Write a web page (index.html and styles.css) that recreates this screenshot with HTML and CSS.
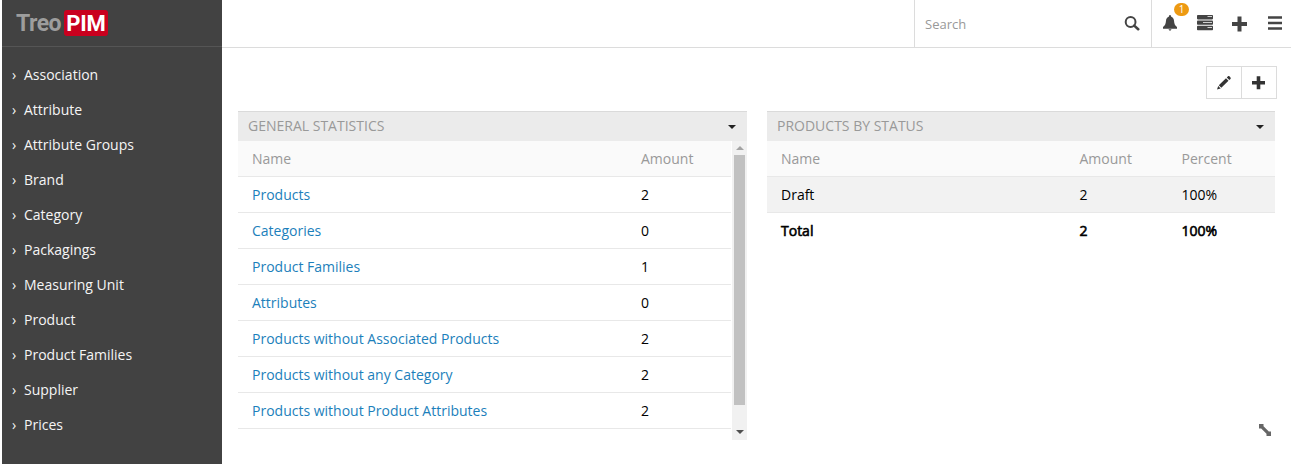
FILE: index.html
```html
<!DOCTYPE html>
<html lang="en">
<head>
<meta charset="utf-8">
<title>TreoPIM</title>
<link rel="stylesheet" href="styles.css">
</head>
<body>
<aside class="sidebar">
  <div class="logo"><span class="logo-name">Treo</span><span class="logo-badge">PIM</span></div>
  <nav class="menu">
    <a>Association</a><a>Attribute</a><a>Attribute Groups</a><a>Brand</a><a>Category</a><a>Packagings</a><a>Measuring Unit</a><a>Product</a><a>Product Families</a><a>Supplier</a><a>Prices</a>
  </nav>
</aside>
<main class="main">
  <header class="topbar">
    <div class="search"><span>Search</span>
      <svg width="16" height="16" viewBox="0 0 16 16"><circle cx="6.600" cy="6" r="4.900" fill="none" stroke="#444" stroke-width="2"/><path d="M10.200 9.600l4 3.600" stroke="#444" stroke-width="2.600" stroke-linecap="round"/></svg>
    </div>
    <div class="tools">
      <span class="bell"><svg width="16" height="17" viewBox="0 0 16 17"><path fill="#444" d="M8 0c.6 0 1 .6 1 1.400C11 2 11.800 3.700 12 5.700c.3 3 .8 4.800 3 6.300V13.800H1V12c2.200-1.500 2.700-3.300 3-6.300C4.200 3.700 5 2 7 1.400 7 .6 7.400 0 8 0z"/><path fill="#444" d="M6.400 14.200h3.200L8 16z"/></svg><span class="badge">1</span></span>
      <svg class="tasks" width="16" height="16" viewBox="0 0 16 16"><g fill="#444"><rect width="16" height="4.400" y="0" rx=".8"/><rect width="16" height="4.400" y="5.400" rx=".8"/><rect width="16" height="4.400" y="10.800" rx=".8"/></g><path stroke="#fff" stroke-width="1" d="M10.500 1.500H15M6 7.500H15M10.500 12.500H15" opacity=".75"/></svg>
      <svg class="add" width="16" height="16" viewBox="0 0 16 16"><path stroke="#444" stroke-width="4" d="M1 8h15M8.500 .5v15"/></svg>
      <svg class="burger" width="14" height="14" viewBox="0 0 14 14"><path stroke="#444" stroke-width="2.600" d="M0 1.500h14M0 7h14M0 12.500h14"/></svg>
    </div>
  </header>
  <div class="actions">
    <div class="button-group">
      <span class="button"><svg width="16" height="16" viewBox="0 0 16 16"><path fill="#333" d="M1 14.500l1.200-3.600 2.500 2.500zM2.800 10.200l7.200-7 2.500 2.500-7.200 7zM10.800 2.400l1.200-1.100c.5-.5 1-.4 1.400 0l1.100 1.200c.4.4.4 1 0 1.400l-1.200 1.100z"/></svg></span>
      <span class="button"><svg width="14" height="14" viewBox="0 0 14 14"><path stroke="#333" stroke-width="3.600" d="M0 6.800h13M6.500 .3v13"/></svg></span>
    </div>
  </div>
  <div class="dashboard">
    <section class="panel">
      <h2 class="panel-title">GENERAL STATISTICS<i class="caret"></i></h2>
      <div class="panel-body scrolling">
        <div class="table stats">
          <div class="row head"><span>Name</span><span>Amount</span></div>
          <div class="row"><a>Products</a><span>2</span></div>
          <div class="row"><a>Categories</a><span>0</span></div>
          <div class="row"><a>Product Families</a><span>1</span></div>
          <div class="row"><a>Attributes</a><span>0</span></div>
          <div class="row"><a>Products without Associated Products</a><span>2</span></div>
          <div class="row"><a>Products without any Category</a><span>2</span></div>
          <div class="row"><a>Products without Product Attributes</a><span>2</span></div>
        </div>
        <div class="scrollbar"><i class="arrow-up"></i><i class="thumb"></i><i class="arrow-down"></i></div>
      </div>
    </section>
    <section class="panel">
      <h2 class="panel-title">PRODUCTS BY STATUS<i class="caret"></i></h2>
      <div class="panel-body">
        <div class="table status">
          <div class="row head"><span>Name</span><span>Amount</span><span>Percent</span></div>
          <div class="row shaded"><span>Draft</span><span>2</span><span>100%</span></div>
          <div class="row total"><span>Total</span><span>2</span><span>100%</span></div>
        </div>
      </div>
      <svg class="resize" width="12" height="12" viewBox="0 0 12 12"><path fill="#666" d="M0 0h4.500v2.200l5.300 5.300H12V12H7.500V9.800L2.200 4.500H0z"/></svg>
    </section>
  </div>
</main>
</body>
</html>
```
FILE: styles.css
```css
* { box-sizing: border-box; }
body { margin: 0; padding-left: 2px; height: 464px; overflow: hidden; display: flex; background: #fff; color: #000; font: 14px/20px "Open Sans", "Noto Sans", sans-serif; }
.sidebar { width: 220px; height: 464px; background: #424242; }
.logo { height: 47px; padding: 10px 0 0 14px; border-bottom: 1px solid #555; display: flex; gap: 2px; font: bold 23px/28px Roboto, sans-serif; }
.logo-name { color: #9d9d9d; width: 46px; letter-spacing: -.5px; }
.logo-badge { width: 44px; height: 26px; border-radius: 3px; background: #c9001e; color: #fff; text-align: center; font-size: 22px; letter-spacing: -.2px; }
.menu { padding-top: 10px; }
.menu a { display: flex; height: 35px; align-items: center; color: #f5f5f5; padding-left: 10px; }
.menu a::before { content: "›"; width: 12px; }
.main { flex: 1; }
.topbar { height: 48px; border-bottom: 1px solid #dcdcdc; display: flex; justify-content: flex-end; }
.search { width: 238px; border: solid #dcdcdc; border-width: 0 1px; padding: 0 11px 0 10px; display: flex; align-items: center; justify-content: space-between; color: #999; font-size: 13px; }
.tools { width: 139px; padding: 15px 9px 0 10px; display: flex; align-items: flex-start; }
.bell { position: relative; height: 17px; display: flex; }
.badge { position: absolute; left: 12px; top: -12px; width: 15px; height: 13px; border-radius: 7px; background: #ed9a12; color: #fff; font-size: 10px; line-height: 13px; text-align: center; }
.tasks { margin-left: 19px; }
.add { margin: 1px 0 0 18px; }
.burger { margin: 1px 0 0 21px; }
.actions { height: 63px; padding: 18px 14px 0 0; display: flex; justify-content: flex-end; }
.button-group { display: flex; width: 71px; height: 33px; border: 1px solid #dcdcdc; }
.button { flex: 1; display: flex; align-items: center; justify-content: center; }
.button + .button { border-left: 1px solid #dcdcdc; }
.dashboard { display: grid; grid-template-columns: 509px 508px; gap: 20px; padding-left: 16px; }
.panel { position: relative; height: 329px; }
.panel-title { margin: 0; height: 30px; padding: 0 11px 2px 10px; border-top: 1px solid #dadada; background: #ebebeb; color: #999; font-size: 14px; font-weight: 400; display: flex; align-items: center; justify-content: space-between; }
.caret { border: 4px solid transparent; border-top-color: #222; border-bottom: 0; margin-top: 3px; }
.panel-body { display: flex; }
.scrolling { height: 299px; justify-content: space-between; }
.table { flex: 1; }
.stats { flex: 0 0 493px; }
.row { display: grid; height: 36px; line-height: 20px; padding: 8px 14px 7px; border-bottom: 1px solid #e8e8e8; }
.stats .row { grid-template-columns: 389px 1fr; }
.status .row { grid-template-columns: 298.500px 102px 1fr; }
.row a { color: #1c7fbb; }
.head { background: #fafafa; color: #999; }
.shaded { background: #f2f2f2; }
.total { border: 0; -webkit-text-stroke: .6px #000; }
.scrollbar { width: 15px; background: #f1f1f1; display: flex; flex-direction: column; align-items: center; padding: 5px 0 6px; }
.arrow-up { border: 4px solid transparent; border-top: 0; border-bottom-color: #a3a3a3; }
.thumb { width: 11px; height: 250px; background: #c1c1c1; margin-top: 5px; }
.arrow-down { border: 4px solid transparent; border-bottom: 0; border-top-color: #505050; margin-top: auto; }
.resize { position: absolute; right: 4px; bottom: 4px; }
```
